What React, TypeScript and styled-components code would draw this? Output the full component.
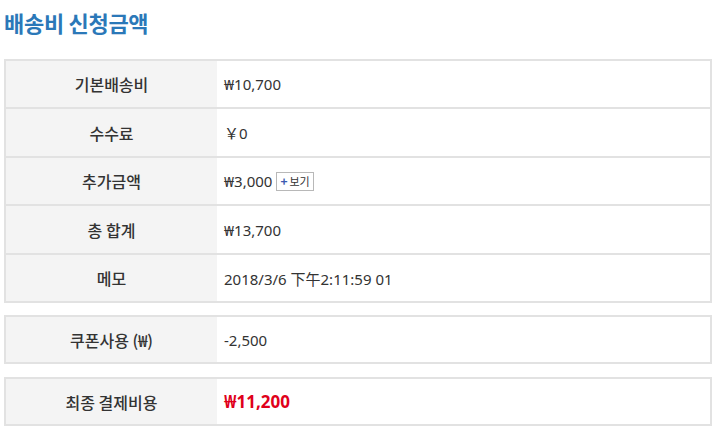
import React from "react";
import styled, { createGlobalStyle } from "styled-components";

const Global = createGlobalStyle`
  html, body { margin: 0; padding: 0; background: #fff; }
  body { font-family: "Noto Sans", "Noto Sans CJK KR", sans-serif; color: #333; }
`;

const Page = styled.div`
  padding: 5px 8px 0 4px;
  width: 708px;
`;

const Title = styled.h2`
  margin: 0 0 20px 0;
  font-family: "Noto Sans CJK KR", sans-serif;
  font-size: 22px;
  line-height: 34px;
  font-weight: 700;
  color: #2b78b8;
  letter-spacing: -0.3px;
`;

const Card = styled.div<{ $gap?: number }>`
  border: 2px solid #e2e2e2;
  margin-bottom: ${(p) => p.$gap ?? 0}px;
  display: flex;
  flex-direction: column;
`;

const Row = styled.div<{ $h?: number }>`
  display: grid;
  grid-template-columns: 211px 1fr;
  height: ${(p) => p.$h ?? 46}px;
  & + & { border-top: 2px solid #e2e2e2; }
`;

const Label = styled.div`
  background: #f4f4f4;
  display: flex;
  align-items: center;
  justify-content: center;
  font-family: "Noto Sans CJK KR", sans-serif;
  font-size: 16px;
  font-weight: 500;
  color: #333;
`;

const Value = styled.div<{ $strong?: boolean }>`
  display: flex;
  align-items: center;
  gap: 4px;
  padding-left: 7px;
  font-size: ${(p) => (p.$strong ? "17px" : "15px")};
  font-weight: ${(p) => (p.$strong ? 700 : 400)};
  color: ${(p) => (p.$strong ? "#e0001b" : "#333")};
`;

const ViewButton = styled.span`
  display: inline-flex;
  align-items: center;
  gap: 2px;
  height: 17px;
  padding: 0 3px 0 3px;
  border: 1px solid #b8b8b8;
  background: #fff;
  font-family: "Noto Sans CJK KR", sans-serif;
  font-size: 11px;
  color: #333;
  line-height: 1;
`;

const Plus = styled.span`
  color: #3a5ab0;
  font-weight: 700;
  font-size: 12px;
`;

export default function App() {
  return (
    <>
      <Global />
      <Page>
        <Title>배송비 신청금액</Title>
        <Card $gap={12}>
          <Row>
            <Label>기본배송비</Label>
            <Value>₩10,700</Value>
          </Row>
          <Row $h={47}>
            <Label>수수료</Label>
            <Value>￥0</Value>
          </Row>
          <Row>
            <Label>추가금액</Label>
            <Value>
              ₩3,000
              <ViewButton>
                <Plus>+</Plus>보기
              </ViewButton>
            </Value>
          </Row>
          <Row $h={47}>
            <Label>총 합계</Label>
            <Value>₩13,700</Value>
          </Row>
          <Row>
            <Label>메모</Label>
            <Value>2018/3/6 下午2:11:59 01</Value>
          </Row>
        </Card>
        <Card $gap={13}>
          <Row $h={45}>
            <Label>쿠폰사용 (₩)</Label>
            <Value>-2,500</Value>
          </Row>
        </Card>
        <Card>
          <Row $h={45}>
            <Label>최종 결제비용</Label>
            <Value $strong>₩11,200</Value>
          </Row>
        </Card>
      </Page>
    </>
  );
}
